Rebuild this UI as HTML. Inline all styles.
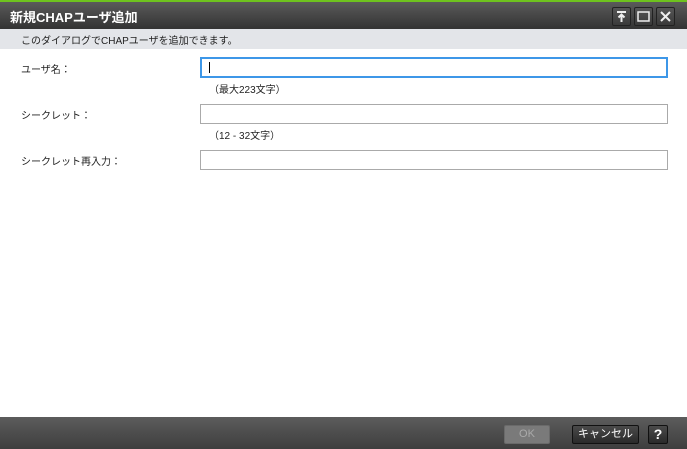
<!DOCTYPE html>
<html><head><meta charset="utf-8"><style>
body{margin:0;width:687px;height:449px;position:relative;background:#fff;font-family:"Liberation Sans","Noto Sans CJK JP",sans-serif;font-size:10px;color:#222;overflow:hidden}
.tb{position:absolute;left:0;top:0;width:687px;height:29px;background:linear-gradient(#5a5a5a,#333);border-top:2px solid #6ec21e;box-sizing:border-box}
.tb .t{position:absolute;left:10px;top:5px;color:#fff;font-weight:bold;font-size:13px}
.wb{position:absolute;top:5px;width:19px;height:19px;border:1px solid #222;border-radius:2px;background:linear-gradient(#555,#3a3a3a);box-sizing:border-box}
.desc{position:absolute;left:0;top:29px;width:687px;height:20px;background:#e3e5e9}
.desc span{position:absolute;left:21px;top:3px}
.l{position:absolute;left:21px}
.in{position:absolute;left:200px;width:468px;height:20px;border:1px solid #aaa;box-sizing:border-box;background:#fff}
.h{position:absolute;left:209px}
.ft{position:absolute;left:0;top:417px;width:687px;height:32px;background:linear-gradient(#5c5c5c,#3e3e3e)}
.b{position:absolute;top:8px;height:19px;border-radius:2px;box-sizing:border-box;text-align:center;line-height:17px;font-size:11px}
</style></head><body>
<div class="tb"><span class="t">新規CHAPユーザ追加</span>
<div class="wb" style="left:612px"><svg width="17" height="17"><path d="M4 4h9M8.5 14V7M5.5 9.5l3-3 3 3" stroke="#eee" stroke-width="2" fill="none"/></svg></div>
<div class="wb" style="left:634px"><svg width="17" height="17"><rect x="3" y="4" width="11" height="9" stroke="#eee" stroke-width="1.5" fill="none"/></svg></div>
<div class="wb" style="left:656px"><svg width="17" height="17"><path d="M4 4l9 9M13 4l-9 9" stroke="#eee" stroke-width="2"/></svg></div>
</div>
<div class="desc"><span>このダイアログでCHAPユーザを追加できます。</span></div>
<div class="l" style="top:61px">ユーザ名：</div>
<div class="in" style="top:57px;height:21px;border:2px solid #3d97e8"><div style="position:absolute;left:7px;top:3px;width:1px;height:11px;background:#000"></div></div>
<div class="h" style="top:81px">（最大223文字）</div>
<div class="l" style="top:107px">シークレット：</div>
<div class="in" style="top:104px"></div>
<div class="h" style="top:127px">（12 - 32文字）</div>
<div class="l" style="top:153px">シークレット再入力：</div>
<div class="in" style="top:150px"></div>
<div class="ft">
<div class="b" style="left:504px;width:46px;background:#7a7a7a;color:#aaa;border:1px solid #6a6a6a">OK</div>
<div class="b" style="left:572px;width:67px;background:linear-gradient(#4a4a4a,#2a2a2a);color:#fff;border:1px solid #111">キャンセル</div>
<div class="b" style="left:648px;width:20px;background:linear-gradient(#4a4a4a,#2a2a2a);color:#fff;border:1px solid #111;font-weight:bold;font-size:14px">?</div>
</div>
</body></html>
